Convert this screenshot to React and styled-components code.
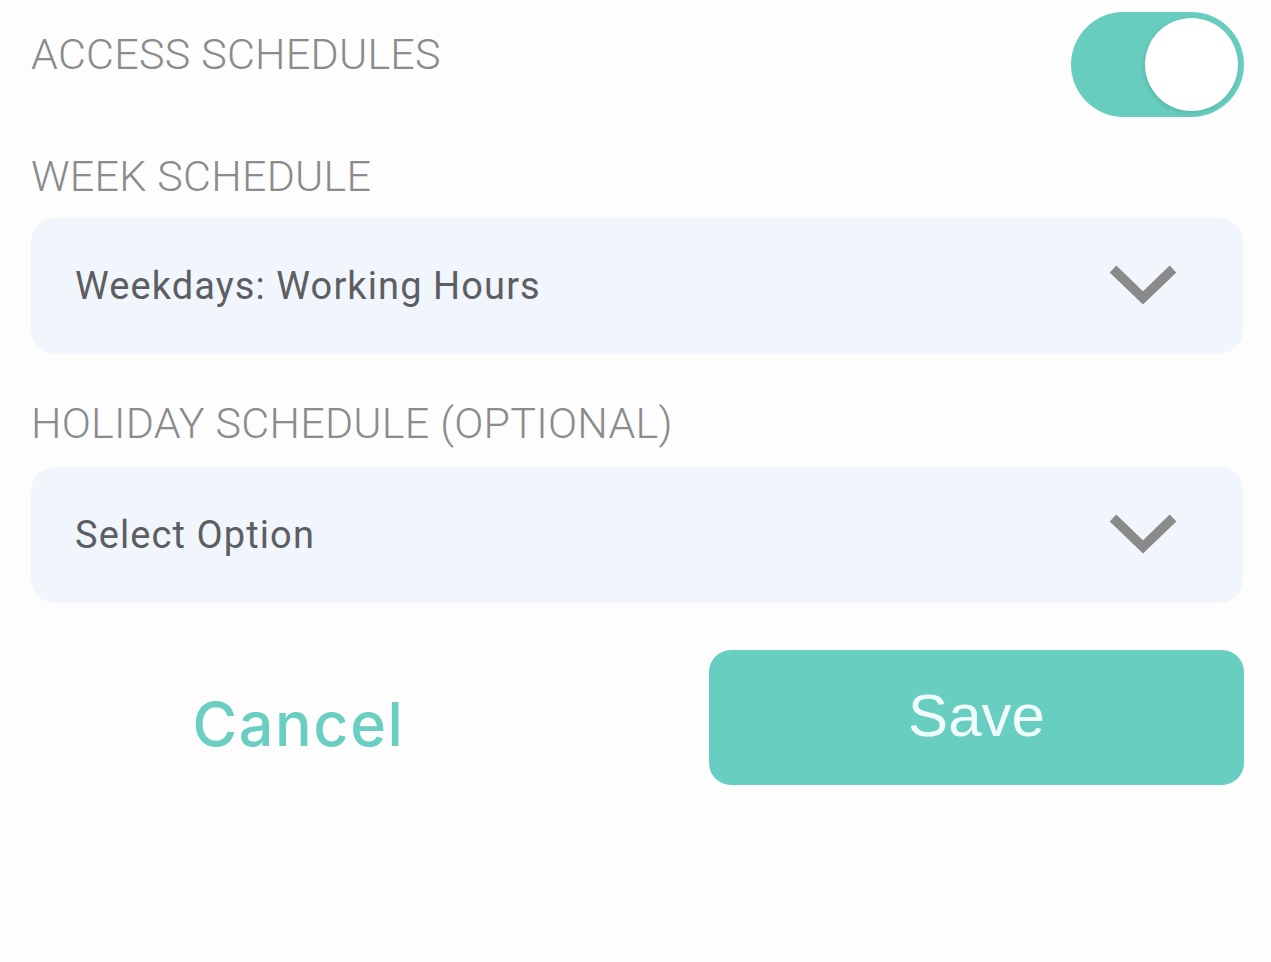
import React from "react";
import styled, { createGlobalStyle } from "styled-components";

const Global = createGlobalStyle`
  html, body { margin: 0; padding: 0; background: #fdfdfd; }
  body { font-family: Roboto, "Liberation Sans", Arial, sans-serif; }
  * { box-sizing: border-box; }
`;

const Page = styled.div`
  width: 1271px;
  min-height: 962px;
  background: #fdfdfd;
  padding: 12px 27px 0 31px;
  display: flex;
  flex-direction: column;
`;

const TopRow = styled.div`
  display: flex;
  justify-content: space-between;
  align-items: flex-start;
`;

const Label = styled.div`
  font-family: Roboto, "Liberation Sans", sans-serif;
  font-weight: 300;
  font-size: 43px;
  line-height: 50px;
  color: #8b8b8b;
  letter-spacing: 0.25px;
  margin-top: ${(p) => p.$top}px;
`;

const Toggle = styled.button`
  width: 173px;
  height: 105px;
  border: none;
  border-radius: 53px;
  background: #66cdbf;
  padding: 6px 6px 6px 0;
  display: flex;
  justify-content: flex-end;
  align-items: center;
  cursor: pointer;
`;

const Knob = styled.span`
  width: 93px;
  height: 93px;
  border-radius: 50%;
  background: #ffffff;
  box-shadow: -1px 2px 4px rgba(0, 0, 0, 0.12);
`;

const Select = styled.div`
  margin-top: ${(p) => p.$top}px;
  height: 136px;
  width: 1212px;
  border-radius: 24px;
  background: #f1f5fc;
  display: flex;
  align-items: center;
  justify-content: space-between;
  padding: 0 66px 0 44px;
`;

const SelectText = styled.span`
  font-family: Roboto, "Liberation Sans", sans-serif;
  font-size: 38px;
  letter-spacing: 1.1px;
  color: #5c5e62;
`;

const Chevron = () => (
  <svg width="68" height="42" viewBox="0 0 68 42" aria-hidden="true">
    <polyline
      points="4,4 34,33 64,4"
      fill="none"
      stroke="#8a8a8a"
      strokeWidth="9.5"
      strokeLinecap="butt"
      strokeLinejoin="miter"
    />
  </svg>
);

const Actions = styled.div`
  margin-top: 47px;
  display: grid;
  grid-template-columns: 535px 535px;
  column-gap: 143px;
  align-items: center;
`;

const CancelButton = styled.button`
  background: transparent;
  border: none;
  height: 135px;
  padding: 12px 0 0 0;
  font-family: Inter, "Liberation Sans", Arial, sans-serif;
  font-weight: 500;
  font-size: 61px;
  letter-spacing: 1.6px;
  color: #6acfc2;
  cursor: pointer;
`;

const SaveButton = styled.button`
  height: 135px;
  border: none;
  border-radius: 22px;
  background: #67cec1;
  font-family: "Liberation Sans", Arial, sans-serif;
  font-weight: 400;
  font-size: 60px;
  letter-spacing: 0px;
  color: #effcfa;
  padding: 0 0 4px 0;
  cursor: pointer;
`;

export default function App() {
  return (
    <>
      <Global />
      <Page>
        <TopRow>
          <Label $top={17}>ACCESS SCHEDULES</Label>
          <Toggle aria-pressed="true">
            <Knob />
          </Toggle>
        </TopRow>
        <Label $top={34}>WEEK SCHEDULE</Label>
        <Select $top={17}>
          <SelectText>Weekdays: Working Hours</SelectText>
          <Chevron />
        </Select>
        <Label $top={44}>HOLIDAY SCHEDULE (OPTIONAL)</Label>
        <Select $top={19}>
          <SelectText>Select Option</SelectText>
          <Chevron />
        </Select>
        <Actions>
          <CancelButton>Cancel</CancelButton>
          <SaveButton>Save</SaveButton>
        </Actions>
      </Page>
    </>
  );
}
